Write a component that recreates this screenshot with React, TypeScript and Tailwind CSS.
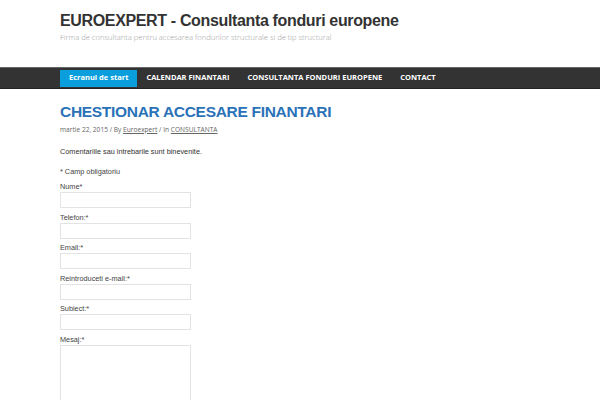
import React from "react";

const nav = ["Ecranul de start", "CALENDAR FINANTARI", "CONSULTANTA FONDURI EUROPENE", "CONTACT"];

const fields = ["Nume*", "Telefon:*", "Email:*", "Reintroduceti e-mail:*", "Subiect:*"];

export default function App() {
  return (
    <div className="w-[600px] h-[400px] overflow-hidden bg-white font-['Liberation_Sans',Arial,sans-serif]">
      {/* Header */}
      <header className="h-[67px] pl-[60px] pt-[11px]">
        <h1 className="text-[16px] leading-[20px] font-bold text-[#333] tracking-[-0.35px]">
          EUROEXPERT - Consultanta fonduri europene
        </h1>
        <p className="mt-[1px] text-[7.6px] leading-[10px] text-[#a0a0a0] font-['Open_Sans',sans-serif] font-light">
          Firma de consultanta pentru accesarea fondurilor structurale si de tip structural
        </p>
      </header>

      {/* Nav */}
      <nav className="h-[22px] bg-[#333] border-t border-t-[#666] border-b border-b-[#222] flex items-center pl-[60px]">
        {nav.map((item, i) => (
          <a
            key={item}
            className={
              "h-[17px] flex items-center px-[9px] text-[7.5px] font-bold text-white font-['Open_Sans',sans-serif] " +
              (i === 0 ? "bg-[#0a9fdc]" : "")
            }
          >
            {item}
          </a>
        ))}
      </nav>

      {/* Content */}
      <main className="pl-[60px] pt-[13px]">
        <h2 className="text-[15.5px] leading-[20px] font-bold text-[#2a72b8] tracking-[-0.3px]">
          CHESTIONAR ACCESARE FINANTARI
        </h2>
        <p className="mt-[3px] text-[6.6px] leading-[10px] text-[#666] font-['Open_Sans',sans-serif]">
          martie 22, 2015 / By <span className="underline">Euroexpert</span> / In{" "}
          <span className="underline">CONSULTANTA</span>
        </p>
        <p className="mt-[12px] text-[7.3px] leading-[10px] text-[#333]">
          Comentariile sau intrebarile sunt binevenite.
        </p>
        <form className="mt-[10px] text-[7.3px] leading-[10px] text-[#444]">
          <p>* Camp obligatoriu</p>
          <div className="mt-[5px]">
            {fields.map((f) => (
              <div key={f} className="mb-[4.6px]">
                <label className="block leading-[10px]">{f}</label>
                <input className="block w-[131px] h-[16px] border border-[#e3e3e3] bg-white" />
              </div>
            ))}
            <label className="block leading-[10px]">Mesaj:*</label>
            <textarea className="block w-[131px] h-[80px] border border-[#e3e3e3] bg-white resize-none" />
          </div>
        </form>
      </main>
    </div>
  );
}
